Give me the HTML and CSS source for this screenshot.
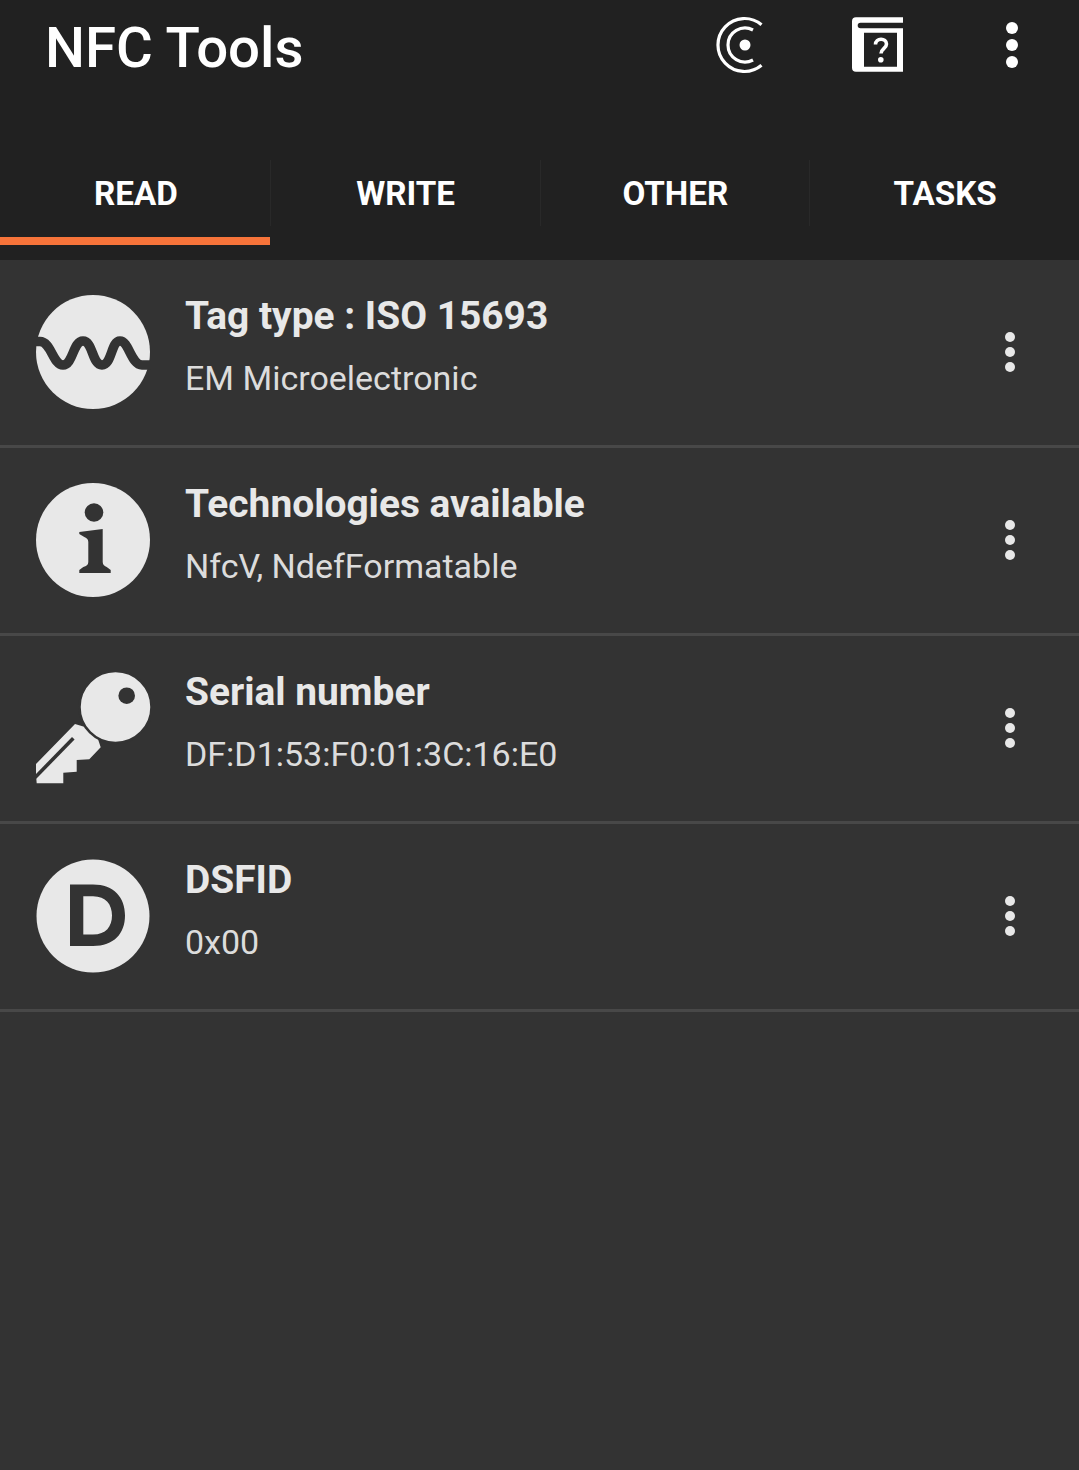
FILE: index.html
```html
<!DOCTYPE html>
<html>
<head>
  <meta charset="utf-8">
  <title>NFC Tools</title>
  <link rel="stylesheet" href="styles.css">
</head>
<body>
  <div class="appbar">
    <div class="toolbar">
      <div class="app-title">NFC Tools</div>
      <div class="actions">
        <svg class="action-icon" width="60" height="60" viewBox="0 0 60 60">
          <circle cx="33" cy="30" r="5.500" fill="#fff"/>
          <path d="M49.500 9.700A26.500 26.500 0 1 0 49.500 50.300" fill="none" stroke="#fff" stroke-width="3.200"/>
          <path d="M41 15A17 17 0 1 0 41 45" fill="none" stroke="#fff" stroke-width="3.200"/>
        </svg>
        <svg class="action-icon" width="60" height="60" viewBox="0 0 60 60">
          <path d="M5 6.300a4 4 0 0 1 4-4h47v5.400H13.500a2.800 2.800 0 0 0 0 5.600H56v43.400H9a4 4 0 0 1-4-4zM17 17.700v34h33v-34z" fill="#fff" fill-rule="evenodd"/>
          <path d="M28.500 29.500c0-7 11-7 11-.500 0 4.500-5.500 4.800-5.500 9.500" fill="none" stroke="#fff" stroke-width="3.600"/>
          <circle cx="33.800" cy="44.800" r="2.800" fill="#fff"/>
        </svg>
        <svg class="action-icon" width="60" height="60" viewBox="0 0 60 60">
          <circle cx="30" cy="13" r="6" fill="#fff"/>
          <circle cx="30" cy="30" r="6" fill="#fff"/>
          <circle cx="30" cy="47" r="6" fill="#fff"/>
        </svg>
      </div>
    </div>
    <div class="tabs">
      <div class="tab tab-active">READ</div>
      <div class="tab">WRITE</div>
      <div class="tab">OTHER</div>
      <div class="tab">TASKS</div>
    </div>
  </div>

  <div class="list">
    <div class="row">
      <svg class="row-icon" width="116" height="116" viewBox="0 0 116 116">
        <circle cx="58" cy="58" r="57" fill="#e8e8e8"/>
        <path d="M0 47.500h5C16 47.500 18 71 28 71S38 47 48 47s9 24 19 24 9-24 18-24 11 24 22 24h9" fill="none" stroke="#333" stroke-width="9.500"/>
      </svg>
      <div class="row-text">
        <div class="row-title">Tag type : ISO 15693</div>
        <div class="row-sub">EM Microelectronic</div>
      </div>
      <div class="row-menu"><span></span><span></span><span></span></div>
    </div>
    <div class="row">
      <svg class="row-icon" width="116" height="116" viewBox="0 0 116 116">
        <circle cx="58" cy="58" r="57" fill="#e8e8e8"/>
        <circle cx="59" cy="30.500" r="9.300" fill="#333"/>
        <path d="M44.300 50L67.700 47V80c0 3 2 4 4 5l4 3v3H44.300v-3l4-3c3-1 5-2 5-5V60c0-3-2-4-4-5l-5-3z" fill="#333"/>
      </svg>
      <div class="row-text">
        <div class="row-title">Technologies available</div>
        <div class="row-sub">NfcV, NdefFormatable</div>
      </div>
      <div class="row-menu"><span></span><span></span><span></span></div>
    </div>
    <div class="row">
      <svg class="row-icon" width="116" height="116" viewBox="0 0 116 116">
        <path d="M40 54L1 94V105L1.700 113.300H28.300V102.700L41.700 101.700V90L54.300 89.300L65.700 77.300L60 60z" fill="#e8e8e8"/>
        <path d="M0 107.500L38.300 68.300" fill="none" stroke="#333" stroke-width="3.600"/>
        <circle cx="80.500" cy="37" r="36" fill="#e8e8e8" stroke="#333" stroke-width="2.500"/>
        <circle cx="91.700" cy="25.700" r="8.300" fill="#333"/>
      </svg>
      <div class="row-text">
        <div class="row-title">Serial number</div>
        <div class="row-sub">DF:D1:53:F0:01:3C:16:E0</div>
      </div>
      <div class="row-menu"><span></span><span></span><span></span></div>
    </div>
    <div class="row">
      <svg class="row-icon" width="116" height="116" viewBox="0 0 116 116">
        <circle cx="58" cy="58" r="56.500" fill="#e8e8e8"/>
        <path d="M35 26.500h23c21 0 32 13 32 31s-11 30.500-32 30.500H35zM48.300 38.200v38.300H58c13 0 19-8 19-19s-6-19.300-19-19.300z" fill="#333" fill-rule="evenodd"/>
      </svg>
      <div class="row-text">
        <div class="row-title">DSFID</div>
        <div class="row-sub">0x00</div>
      </div>
      <div class="row-menu"><span></span><span></span><span></span></div>
    </div>
  </div>
</body>
</html>
```

FILE: styles.css
```css
* {
  box-sizing: border-box;
}

html, body {
  height: 100%;
}

body {
  margin: 0;
  background-color: #333333;
  font-family: "Roboto", "Liberation Sans", sans-serif;
}

/* top bar */
.appbar {
  height: 260px;
  background-color: #212121;
}

.toolbar {
  display: flex;
  align-items: center;
  justify-content: space-between;
  height: 96px;
  padding: 0 37px 0 45px;
}

.app-title {
  color: #fff;
  font-size: 56.4px;
  font-weight: 500;
}

.actions {
  display: flex;
  gap: 75px;
  margin-bottom: 6px;
}

/* tabs */
.tabs {
  display: flex;
  height: 149px;
}

.tab {
  position: relative;
  flex: 1;
  display: flex;
  align-items: center;
  justify-content: center;
  padding-top: 53px;
  padding-left: 2px;
  color: #fff;
  font-size: 33.2px;
  font-weight: 700;
  border-bottom: 8px solid transparent;
}

/* faint divider between tabs */
.tab + .tab::before {
  content: "";
  position: absolute;
  left: 0;
  top: 64px;
  width: 1px;
  height: 66px;
  background-color: #292929;
}

.tab-active {
  border-bottom-color: #f7743a;
}

/* rows */
.row {
  display: flex;
  align-items: center;
  height: 188px;
  padding: 0 64px 2px 35px;
  border-bottom: 3px solid #484848;
}

.row-icon {
  flex: none;
}

.row-text {
  flex: 1;
  margin-left: 34px;
  padding-bottom: 12px;
}

.row-title {
  color: #e8e8e8;
  font-size: 38.9px;
  font-weight: 700;
  line-height: 44px;
}

.row-sub {
  margin-top: 20px;
  color: #dcdcdc;
  font-size: 34px;
  line-height: 40px;
}

.row-menu {
  display: flex;
  flex-direction: column;
  gap: 5px;
}

.row-menu span {
  width: 10px;
  height: 10px;
  border-radius: 50%;
  background-color: #e8e8e8;
}
```
